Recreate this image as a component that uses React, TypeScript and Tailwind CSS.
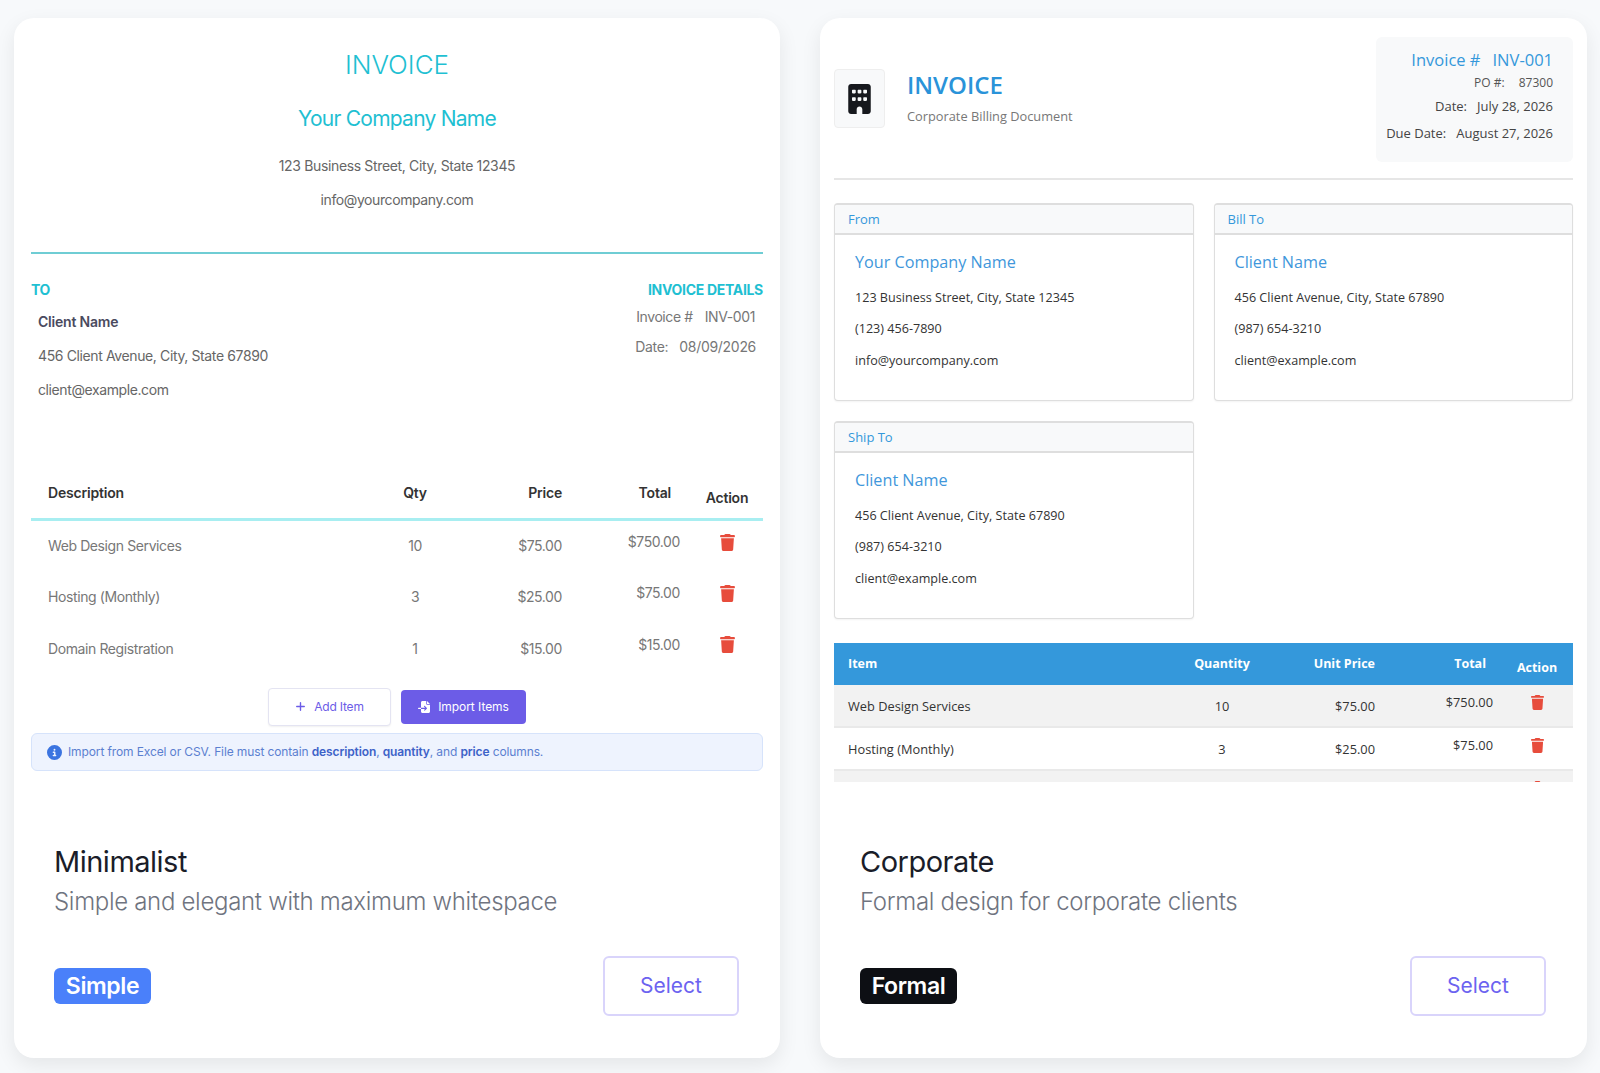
import { FaBuilding, FaTrash, FaPlus, FaFileImport, FaCircleInfo } from "react-icons/fa6";

const minRows = [
  ["Web Design Services", "10", "$75.00", "$750.00"],
  ["Hosting (Monthly)", "3", "$25.00", "$75.00"],
  ["Domain Registration", "1", "$15.00", "$15.00"],
];

function Minimalist() {
  return (
    <div className="h-[764px] overflow-hidden px-[17px] pt-[30px] font-['Inter',sans-serif]">
      <div className="text-center text-[26px] leading-[34px] font-light text-[#1fc0d2]">INVOICE</div>
      <div className="mt-[22px] text-center text-[21px] leading-[30px] tracking-[-0.75px] text-[#1fc0d2]">Your Company Name</div>
      <div className="mt-[22px] text-center text-[14px] leading-[20px] tracking-[-0.35px] text-[#666]">123 Business Street, City, State 12345</div>
      <div className="mt-[14px] text-center text-[14px] leading-[20px] tracking-[-0.4px] text-[#666]">info@yourcompany.com</div>
      <div className="mt-[42px] h-[2px] bg-[#6fcdd4]" />
      <div className="mt-[26px] flex justify-between">
        <div>
          <div className="text-[14px] leading-[20px] font-bold tracking-[-0.4px] text-[#1fc0d2]">TO</div>
          <div className="mt-[12px] pl-[7px] text-[14px] leading-[20px] font-semibold tracking-[-0.2px] text-[#4a4a5e]">Client Name</div>
          <div className="mt-[14px] pl-[7px] text-[14px] leading-[20px] tracking-[-0.38px] text-[#666]">456 Client Avenue, City, State 67890</div>
          <div className="mt-[14px] pl-[7px] text-[14px] leading-[20px] tracking-[-0.4px] text-[#666]">client@example.com</div>
        </div>
        <div className="flex flex-col items-end">
          <div className="text-[14px] leading-[20px] font-bold tracking-[-0.3px] text-[#1fc0d2]">INVOICE DETAILS</div>
          <div className="mt-[7px] flex gap-[12px] pr-[8px] text-[14px] leading-[20px] tracking-[-0.4px] text-[#777]"><span>Invoice #</span><span>INV-001</span></div>
          <div className="mt-[10px] flex gap-[11px] pr-[7px] text-[14px] leading-[20px] tracking-[-0.3px] text-[#777]"><span>Date:</span><span>08/09/2026</span></div>
        </div>
      </div>
      <div className="mt-[70px] grid h-[48px] grid-cols-[346px_76px_109px_118px_1fr] items-center pb-[3px] text-[14px] font-semibold tracking-[-0.2px] text-[#333]">
        <div className="pl-[17px]">Description</div>
        <div className="text-center">Qty</div>
        <div className="text-right">Price</div>
        <div className="pr-[9px] text-right">Total</div>
        <div className="pt-[9px] pl-[11px] text-center">Action</div>
      </div>
      <div className="h-[3px] bg-[#a8eef1]" />
      {minRows.map((r) => (
        <div key={r[0]} className="grid h-[51.3px] grid-cols-[346px_76px_109px_118px_1fr] items-center pb-[2px] text-[14px] tracking-[-0.4px] text-[#777]">
          <div className="pl-[17px]">{r[0]}</div>
          <div className="text-center">{r[1]}</div>
          <div className="text-right">{r[2]}</div>
          <div className="pb-[8px] text-right">{r[3]}</div>
          <div className="flex justify-center pb-[7px] pl-[11px]"><FaTrash className="h-[17px] w-[15px] text-[#e74c3c]" /></div>
        </div>
      ))}
      <div className="mt-[13px] flex items-center justify-center gap-[10px]">
        <div className="flex h-[38px] w-[123px] items-center justify-center gap-[8px] rounded-[4px] border border-[#e4e4f2] bg-white text-[12px] tracking-[-0.2px] text-[#6c5ce7] shadow-[0_1px_2px_rgba(0,0,0,0.06)]">
          <FaPlus className="h-[11px] w-[11px]" />Add Item
        </div>
        <div className="flex h-[34px] w-[125px] items-center justify-center gap-[8px] rounded-[4px] bg-[#6c5ce7] text-[12px] tracking-[-0.05px] text-white">
          <FaFileImport className="h-[14px] w-[12px]" />Import Items
        </div>
      </div>
      <div className="mt-[7px] flex h-[38px] items-center gap-[6px] rounded-[6px] border border-[#d6e3fb] bg-[#eef3fe] pt-[1px] pl-[15px] text-[12px] tracking-[-0.12px] text-[#5b7fd0]">
        <FaCircleInfo className="h-[15px] w-[15px] text-[#3b74e0]" />
        <span>Import from Excel or CSV. File must contain <b className="font-semibold text-[#3d62c8]">description</b>, <b className="font-semibold text-[#3d62c8]">quantity</b>, and <b className="font-semibold text-[#3d62c8]">price</b> columns.</span>
      </div>
    </div>
  );
}

function Panel({ label, name, lines }: { label: string; name: string; lines: string[] }) {
  return (
    <div className="h-[198px] overflow-hidden rounded-[4px] border border-t-2 border-[#dedede] bg-white shadow-[0_1px_2px_rgba(0,0,0,0.05)]">
      <div className="flex h-[30px] items-center border-b-2 border-[#dedede] bg-[#f8f9fa] pt-[1px] pl-[13px] text-[13px] text-[#3498db]">{label}</div>
      <div className="pt-[15px] pl-[20px]">
        <div className="text-[16.2px] leading-[24px] font-medium text-[#3f97db]">{name}</div>
        <div className="mt-[14px] text-[12.6px] leading-[20px] text-[#333]">{lines[0]}</div>
        <div className="mt-[11px] text-[12.6px] leading-[20px] text-[#333]">{lines[1]}</div>
        <div className="mt-[11.5px] text-[12.6px] leading-[20px] text-[#333]">{lines[2]}</div>
      </div>
    </div>
  );
}

const corpRows = [
  { key: "web", cells: ["Web Design Services", "10", "$75.00", "$750.00"], bg: "bg-[#f2f2f2]" },
  { key: "hosting", cells: ["Hosting (Monthly)", "3", "$25.00", "$75.00"], bg: "bg-white" },
  { key: "domain", cells: ["", "", "", ""], bg: "bg-[#f2f2f2]" },
];

function Corporate() {
  return (
    <div className="h-[764px] overflow-hidden px-[14px] pt-[19px] font-['Open_Sans',sans-serif]">
      <div className="flex items-center justify-between">
        <div className="flex items-center gap-[22px] pb-[2px]">
          <div className="flex h-[59px] w-[51px] items-center justify-center rounded-[4px] border border-[#eeeeee] bg-[#f8f9fa]">
            <FaBuilding className="h-[30px] w-[23px] text-[#16181d]" />
          </div>
          <div className="pb-[2px]">
            <div className="text-[24px] leading-[30px] font-semibold text-[#2a93d9]">INVOICE</div>
            <div className="mt-[7px] text-[12.8px] leading-[18px] text-[#777]">Corporate Billing Document</div>
          </div>
        </div>
        <div className="flex h-[125px] w-[197px] flex-col items-end rounded-[6px] bg-[#f8f9fa] pt-[11px] pr-[20px]">
          <div className="flex gap-[12px] text-[16.5px] leading-[24px] text-[#3498db]"><span>Invoice #</span><span>INV-001</span></div>
          <div className="mt-[3px] flex gap-[14px] text-[12px] leading-[16px] text-[#555]"><span>PO #:</span><span>87300</span></div>
          <div className="mt-[5px] flex gap-[10px] text-[13px] leading-[20px] text-[#444]"><span>Date:</span><span>July 28, 2026</span></div>
          <div className="mt-[7px] flex gap-[10px] text-[13px] leading-[20px] text-[#444]"><span>Due Date:</span><span>August 27, 2026</span></div>
        </div>
      </div>
      <div className="mt-[16px] h-[2px] bg-[#e6e6e6]" />
      <div className="mt-[23px] grid grid-cols-2 gap-[20px]">
        <Panel label="From" name="Your Company Name" lines={["123 Business Street, City, State 12345", "(123) 456-7890", "info@yourcompany.com"]} />
        <Panel label="Bill To" name="Client Name" lines={["456 Client Avenue, City, State 67890", "(987) 654-3210", "client@example.com"]} />
        <Panel label="Ship To" name="Client Name" lines={["456 Client Avenue, City, State 67890", "(987) 654-3210", "client@example.com"]} />
      </div>
      <div className="mt-[24px] grid h-[42px] grid-cols-[306px_164px_71px_118px_1fr] items-center bg-[#3498db] text-[12.5px] font-bold text-white">
        <div className="pl-[14px]">Item</div>
        <div className="text-center">Quantity</div>
        <div className="text-right">Unit Price</div>
        <div className="pr-[7px] text-right">Total</div>
        <div className="pt-[9px] pl-[8px] text-center">Action</div>
      </div>
      {corpRows.map((r) => (
        <div key={r.key} className={`grid h-[43px] grid-cols-[306px_164px_71px_118px_1fr] items-center border-b-2 border-[#e9e9e9] pt-[2px] text-[12.8px] text-[#333] ${r.bg}`}>
          <div className="pl-[14px]">{r.cells[0]}</div>
          <div className="text-center">{r.cells[1]}</div>
          <div className="text-right">{r.cells[2]}</div>
          <div className="pb-[7px] text-right">{r.cells[3]}</div>
          <div className="flex justify-center pb-[8px] pl-[8px]"><FaTrash className="h-[15px] w-[13px] text-[#e74c3c]" /></div>
        </div>
      ))}
    </div>
  );
}

function Footer({ title, desc, badge, badgeClass }: { title: string; desc: string; badge: string; badgeClass: string }) {
  return (
    <div className="pt-[62px] pr-[41px] pb-[42px] pl-[40px] font-['Inter',sans-serif]">
      <div className="text-[29px] leading-[36px] font-normal tracking-[-0.5px] text-[#1a1d29]">{title}</div>
      <div className="mt-[6px] text-[24px] leading-[32px] font-light tracking-[-0.31px] text-[#6f7480]">{desc}</div>
      <div className="mt-[38px] flex h-[60px] items-center justify-between">
        <div className={badgeClass}>{badge}</div>
        <div className="flex h-[60px] w-[136px] items-center justify-center rounded-[6px] border-2 border-[#d9d4fb] bg-white text-[21px] font-normal text-[#6c63f0]">Select</div>
      </div>
    </div>
  );
}

export default function App() {
  return (
    <div className="h-[1073px] overflow-hidden bg-[#f7f9fb] px-[14px] pt-[18px]">
      <div className="grid grid-cols-[766px_767px] gap-[40px]">
        <div className="rounded-[20px] bg-white shadow-[0_7px_20px_rgba(0,0,0,0.08)]">
          <Minimalist />
          <Footer title="Minimalist" desc="Simple and elegant with maximum whitespace" badge="Simple"
            badgeClass="flex h-[36px] w-[97px] items-center justify-center rounded-[6px] bg-[#4a80fa] text-[23px] font-semibold tracking-[-0.4px] text-white" />
        </div>
        <div className="rounded-[20px] bg-white shadow-[0_7px_20px_rgba(0,0,0,0.08)]">
          <Corporate />
          <Footer title="Corporate" desc="Formal design for corporate clients" badge="Formal"
            badgeClass="flex h-[36px] w-[97px] items-center justify-center rounded-[6px] bg-[#0d0f14] text-[23px] font-semibold tracking-[-0.4px] text-white" />
        </div>
      </div>
    </div>
  );
}
